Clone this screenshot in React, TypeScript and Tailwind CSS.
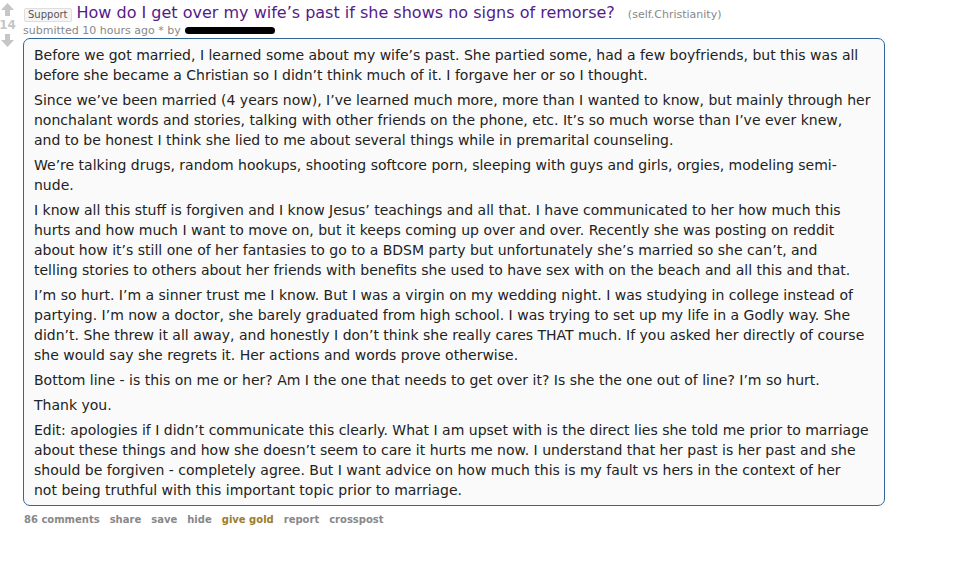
import React from "react";

const paragraphs: string[][] = [
  [
    "Before we got married, I learned some about my wife’s past. She partied some, had a few boyfriends, but this was all",
    "before she became a Christian so I didn’t think much of it. I forgave her or so I thought.",
  ],
  [
    "Since we’ve been married (4 years now), I’ve learned much more, more than I wanted to know, but mainly through her",
    "nonchalant words and stories, talking with other friends on the phone, etc. It’s so much worse than I’ve ever knew,",
    "and to be honest I think she lied to me about several things while in premarital counseling.",
  ],
  [
    "We’re talking drugs, random hookups, shooting softcore porn, sleeping with guys and girls, orgies, modeling semi-",
    "nude.",
  ],
  [
    "I know all this stuff is forgiven and I know Jesus’ teachings and all that. I have communicated to her how much this",
    "hurts and how much I want to move on, but it keeps coming up over and over. Recently she was posting on reddit",
    "about how it’s still one of her fantasies to go to a BDSM party but unfortunately she’s married so she can’t, and",
    "telling stories to others about her friends with benefits she used to have sex with on the beach and all this and that.",
  ],
  [
    "I’m so hurt. I’m a sinner trust me I know. But I was a virgin on my wedding night. I was studying in college instead of",
    "partying. I’m now a doctor, she barely graduated from high school. I was trying to set up my life in a Godly way. She",
    "didn’t. She threw it all away, and honestly I don’t think she really cares THAT much. If you asked her directly of course",
    "she would say she regrets it. Her actions and words prove otherwise.",
  ],
  [
    "Bottom line - is this on me or her? Am I the one that needs to get over it? Is she the one out of line? I’m so hurt.",
  ],
  ["Thank you."],
  [
    "Edit: apologies if I didn’t communicate this clearly. What I am upset with is the direct lies she told me prior to marriage",
    "about these things and how she doesn’t seem to care it hurts me now. I understand that her past is her past and she",
    "should be forgiven - completely agree. But I want advice on how much this is my fault vs hers in the context of her",
    "not being truthful with this important topic prior to marriage.",
  ],
];

const Arrow = ({ down }: { down?: boolean }) => (
  <svg width="15" height="15" viewBox="0 0 15 15" className={down ? "rotate-180" : ""}>
    <path d="M7.5 1 L14 8 L10 8 L10 14 L5 14 L5 8 L1 8 Z" fill="#c6c6c6" />
  </svg>
);

export default function App() {
  return (
    <div className="min-h-screen bg-white font-['DejaVu_Sans',Verdana,sans-serif] text-[#222]">
      <div className="flex">
        <div className="flex w-[15px] shrink-0 flex-col items-center pt-[2px]">
          <Arrow />
          <div className="text-[12px] font-bold leading-[16px] text-[#c6c6c6]">14</div>
          <Arrow down />
        </div>
        <div className="ml-[8px] flex flex-col">
          <div className="flex items-baseline pt-[3px]">
            <span className="ml-[1px] mr-[5px] rounded-[2px] border border-[#dedede] bg-[#f5f5f5] px-[3px] text-[10px] leading-[12px] text-[#555]">
              Support
            </span>
            <span className="text-[16px] leading-[19px] text-[#551a8b]">
              How do I get over my wife’s past if she shows no signs of remorse?
            </span>
            <span className="ml-[13px] text-[11px] text-[#888]">(self.Christianity)</span>
          </div>
          <div className="flex items-center text-[11px] leading-[14px] text-[#888]">
            <span>submitted 10 hours ago * by</span>
            <span className="ml-[4px] h-[7px] w-[90px] rounded-full bg-black" />
          </div>
          <div className="w-[862px] rounded-[7px] border border-[#369] bg-[#fafafa] px-[10px] pb-0 pt-[6px] text-[14px] leading-[20px]">
            {paragraphs.map((lines, i) => (
              <p key={i} className="mb-[5px] whitespace-nowrap">
                {lines.map((l, j) => (
                  <React.Fragment key={j}>
                    {l}
                    {j < lines.length - 1 && <br />}
                  </React.Fragment>
                ))}
              </p>
            ))}
          </div>
          <div className="mt-[6px] flex gap-[10px] pl-[1px] text-[10px] font-bold text-[#888]">
            <span>86 comments</span>
            <span>share</span>
            <span>save</span>
            <span>hide</span>
            <span className="text-[#9a7d2e]">give gold</span>
            <span>report</span>
            <span>crosspost</span>
          </div>
        </div>
      </div>
    </div>
  );
}
